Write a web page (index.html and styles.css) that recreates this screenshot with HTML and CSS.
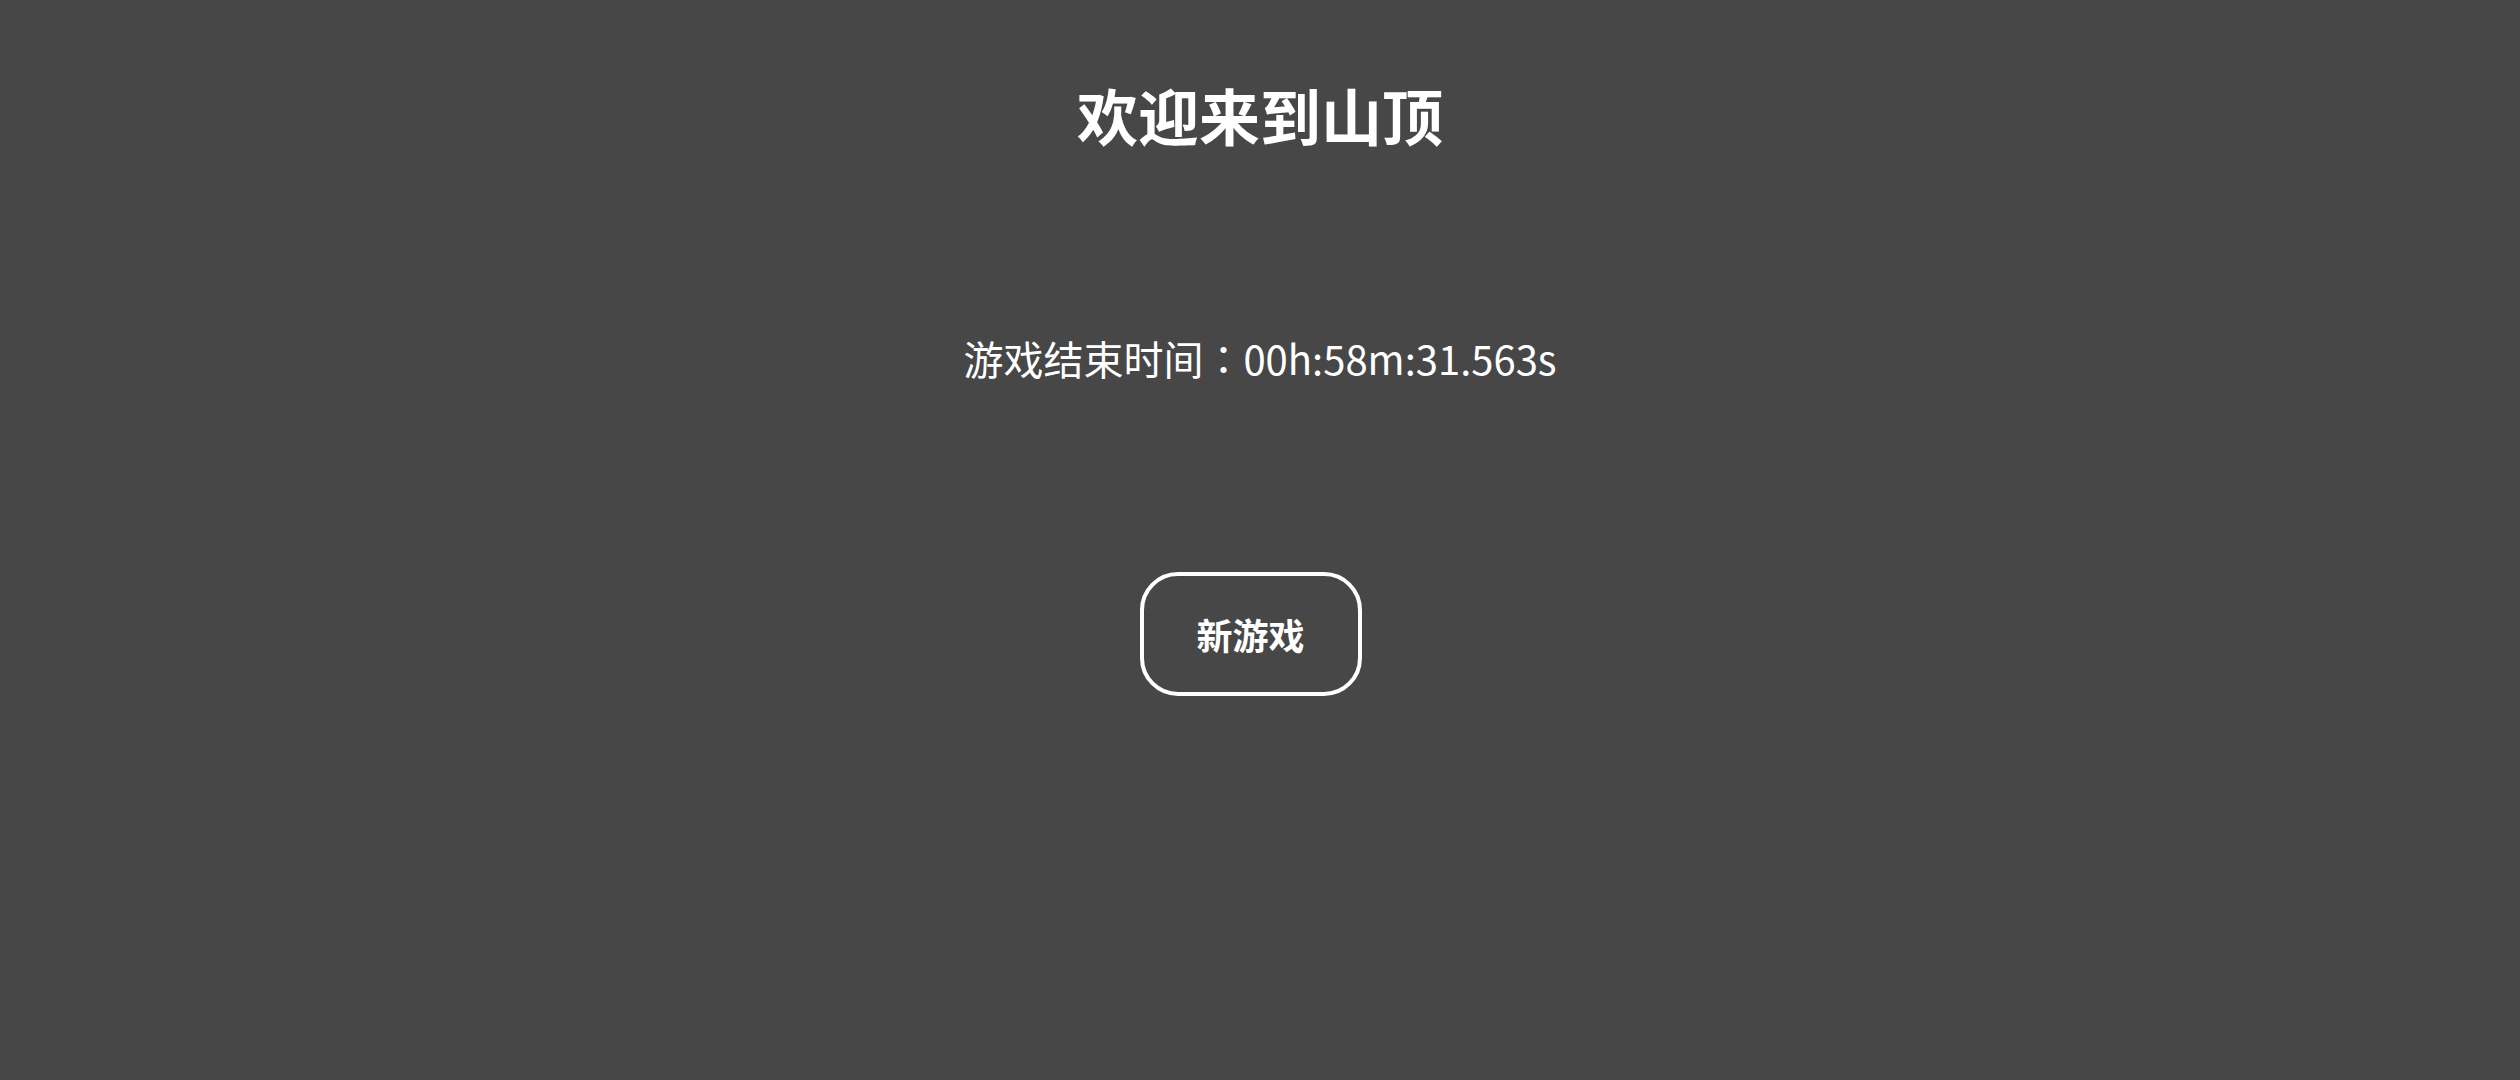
FILE: index.html
```html
<!DOCTYPE html>
<html lang="zh-CN">
<head>
  <meta charset="UTF-8" />
  <meta name="viewport" content="width=device-width, initial-scale=1.0"/>
  <title>欢迎来到山顶</title>
  <link rel="stylesheet" href="styles.css">
</head>
<body>

  <main class="summit">
    <h1 class="title">欢迎来到山顶</h1>
    <p class="result">游戏结束时间<span class="sep" lang="zh-TW">：</span><span id="finish-time">00h:58m:31.563s</span></p>
    <button class="restart" type="button">新游戏</button>
  </main>

</body>
</html>
```

FILE: styles.css
```css
body {
  font-family: "Noto Sans CJK SC", "Noto Sans", sans-serif;
  background: #474747;
  color: #fff;
  margin: 0;
  height: 100vh;
}

.summit {
  display: flex;
  flex-direction: column;
  align-items: center;
  padding-top: 84px;
}

.title {
  font-size: 61px;
  font-weight: bold;
  line-height: 1;
  margin: 0;
}

.result {
  font-size: 40px;
  line-height: 1;
  margin: 193px 0 0;
}

/* centred full-width colon */
.sep {
  font-family: "Noto Sans CJK TC", sans-serif;
}

.restart {
  box-sizing: border-box;
  width: 222px;
  height: 124px;
  font-family: inherit;
  font-size: 36px;
  font-weight: bold;
  line-height: 1;
  color: #fff;
  background: transparent;
  border: 4px solid #fff;
  border-radius: 38px;
  padding: 0;
  margin: 194px 19px 0 0;
  cursor: pointer;
}
```
